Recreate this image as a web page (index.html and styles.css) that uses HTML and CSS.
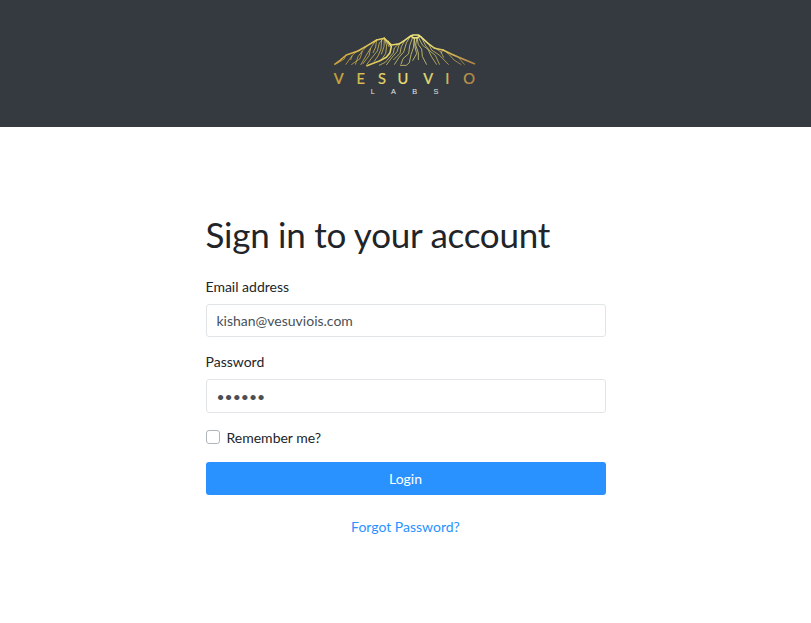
FILE: index.html
```html
<!DOCTYPE html>
<html lang="en">
<head>
<meta charset="utf-8">
<title>Sign in</title>
<link rel="stylesheet" href="styles.css">
</head>
<body>
<header class="header">
  <svg class="logo" viewBox="0 0 480 240" role="img" aria-label="Vesuvio Labs">
    <defs>
      <linearGradient id="gold" gradientUnits="userSpaceOnUse" x1="28" y1="0" x2="450" y2="0">
        <stop offset="0" stop-color="#cda136"/>
        <stop offset=".35" stop-color="#e6d265"/>
        <stop offset=".6" stop-color="#efe581"/>
        <stop offset=".8" stop-color="#d8bd55"/>
        <stop offset="1" stop-color="#b28445"/>
      </linearGradient>
    </defs>
    <g class="ridge">
      <path d="M28 119 L45 106 L64 90 L99 78 L132 59 L155 45 L178 40 L188 50 L200 60 L224 56 L242 44 L257 33 L264 30 L280 30 L287 35 L309 55 L329 70 L354 75 L385 90 L450 117"/>
      <path d="M188 48 L199 65 L195 83 L184 97 L163 108 L145 115 L124 123"/>
      <path d="M258 34 L267 39 L278 38 L286 33"/>
    </g>
    <g class="slopes">
      <path d="M64 88 L58 102 L35 116 M99 76 L82 91 L62 119 M82 91 L77 105 M132 57 L112 78 L99 95 L91 119 M112 78 L105 101 L79 119 M155 43 L137 69 L126 87 L107 120 M137 69 L132 92 L113 117 M178 38 L163 54 L157 78 L140 99 L125 119 M170 44 L168 72 L159 93 L147 110 M178 38 L177 65 L169 88 M178 38 L185 63 L182 86 L171 101 M178 38 L193 66 M155 43 L152 66 L144 84"/>
      <path d="M224 54 L208 69 L205 84 L181 112 L162 121 M224 54 L216 80 L202 96 L184 120 M242 42 L229 65 L225 85 L205 105 M257 32 L244 54 L236 81 L222 97 L208 119 M263 37 L254 62 L251 86 L234 101 L228 118 M268 38 L265 69 L258 89 L253 113 L244 121 L225 121 M268 38 L270 66 L275 86 L263 107"/>
      <path d="M276 38 L280 59 L290 72 L292 94 L305 119 M280 37 L293 61 L309 73 L319 94 L335 119 M287 33 L302 62 L315 78 L331 91 L344 119 M309 53 L320 75 L344 91 L371 119 M329 68 L348 81 L356 98 M354 73 L374 90 L387 105 L409 119 M354 73 L348 85 M385 88 L399 96 L419 119 M276 38 L272 60 L280 84 L280 105"/>
    </g>
    <g class="brand">
      <text x="41.5" y="177">V</text><text x="107" y="177">E</text><text x="171" y="177">S</text><text x="234" y="177">U</text><text x="310" y="177">V</text><text x="367" y="177">I</text><text x="432" y="177">O</text>
    </g>
    <g class="labs">
      <text x="143" y="207">L</text><text x="205" y="207">A</text><text x="269" y="207">B</text><text x="333" y="207">S</text>
    </g>
  </svg>
</header>
<main class="signin">
  <h1 class="title">Sign in to your account</h1>
  <form>
    <label class="label" for="email">Email address</label>
    <input class="input" id="email" type="text" value="kishan@vesuviois.com">
    <label class="label" for="password">Password</label>
    <input class="input input-password" id="password" type="password" value="secret">
    <label class="remember"><input class="check" type="checkbox"><span>Remember me?</span></label>
    <button class="login" type="button">Login</button>
    <a class="forgot" href="#">Forgot Password?</a>
  </form>
</main>
</body>
</html>
```
FILE: styles.css
```css
* { box-sizing: border-box; }

body {
  margin: 0;
  background: #fff;
  color: #212529;
  font: 14px/21px Lato, sans-serif;
}

.header {
  height: 127px;
  padding: 25px 1px 0 0;
  background: #343a40;
}

.logo {
  display: block;
  width: 160px;
  height: 80px;
  margin: 0 auto;
}

.ridge path,
.slopes path {
  fill: none;
  stroke: url(#gold);
  stroke-linejoin: round;
}

.ridge path { stroke-width: 4.8; }
.slopes path { stroke-width: 3; opacity: .7; }

.brand text {
  fill: url(#gold);
  stroke: url(#gold);
  stroke-width: .7;
  font: 44px Lato, sans-serif;
  text-anchor: middle;
}

.labs text {
  fill: #e4e6e8;
  font: 22px "Liberation Sans", sans-serif;
  text-anchor: middle;
}

.signin {
  width: 400px;
  margin: 86px auto 0;
}

.title {
  margin: 0 0 21px;
  font-size: 35px;
  font-weight: 400;
  letter-spacing: -.26px;
  line-height: 42px;
  white-space: nowrap;
}

.label {
  display: block;
  margin-bottom: 7px;
}

.input {
  display: block;
  width: 100%;
  height: 33px;
  margin: 0 0 14px;
  padding: 0 10px;
  border: 1px solid #e2e5e8;
  border-radius: 3px;
  color: #495057;
  font: inherit;
}

.input-password { height: 34px; }

.remember {
  display: flex;
  align-items: flex-start;
  gap: 7px;
}

.check {
  appearance: none;
  width: 14px;
  height: 14px;
  margin: 3px 0 0;
  border: 1px solid #adb5bd;
  border-radius: 3px;
}

.login {
  display: block;
  width: 100%;
  height: 33px;
  margin: 14px 0 21px;
  padding: 0;
  border: 0;
  border-radius: 3px;
  background: #2992ff;
  color: #fff;
  font: inherit;
}

.forgot {
  display: block;
  color: #2992ff;
  text-align: center;
  text-decoration: none;
}
```
